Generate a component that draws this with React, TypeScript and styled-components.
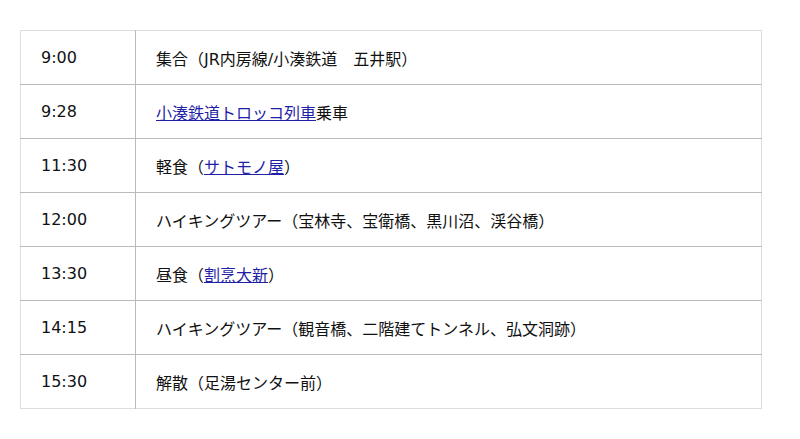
import styled, {createGlobalStyle} from 'styled-components'

const GlobalStyle = createGlobalStyle`
    body {
        margin: 0;
        background: #fff;
        font-family: "DejaVu Sans", "Noto Sans CJK JP", sans-serif;
        color: #111;
    }
`

interface Item {
    time: string
    parts: Array<string | {link: string}>
}

const schedule: Item[] = [
    {time: '9:00', parts: ['集合（JR内房線/小湊鉄道　五井駅）']},
    {time: '9:28', parts: [{link: '小湊鉄道トロッコ列車'}, '乗車']},
    {time: '11:30', parts: ['軽食（', {link: 'サトモノ屋'}, '）']},
    {time: '12:00', parts: ['ハイキングツアー（宝林寺、宝衛橋、黒川沼、渓谷橋）']},
    {time: '13:30', parts: ['昼食（', {link: '割烹大新'}, '）']},
    {time: '14:15', parts: ['ハイキングツアー（観音橋、二階建てトンネル、弘文洞跡）']},
    {time: '15:30', parts: ['解散（足湯センター前）']},
]

// schedule table for the hiking day
export default function App() {
    return (
        <Page>
            <GlobalStyle />
            <Table>
                <tbody>
                    {schedule.map((item) => (
                        <Row key={item.time}>
                            <TimeCell>{item.time}</TimeCell>
                            <EventCell>
                                {item.parts.map((p, i) =>
                                    typeof p === 'string' ? (
                                        <span key={i}>{p}</span>
                                    ) : (
                                        <Link key={i} href="#">
                                            {p.link}
                                        </Link>
                                    )
                                )}
                            </EventCell>
                        </Row>
                    ))}
                </tbody>
            </Table>
        </Page>
    )
}

const Page = styled.div`
    padding: 30px 20px;
`

const Table = styled.table`
    width: 742px;
    border-collapse: collapse;
    border: 1px solid #ddd;
    font-size: 16px;
`

const Row = styled.tr`
    height: 54px;

    & + & td {
        border-top: 1px solid #bbb;
    }
`

const TimeCell = styled.td`
    width: 74px;
    padding: 0 20px;
    border-right: 1px solid #bbb;
    vertical-align: middle;
    white-space: nowrap;
`

const EventCell = styled.td`
    padding: 0 20px;
    vertical-align: middle;
`

const Link = styled.a`
    color: #1f1fa8;
    text-decoration: underline;
`
